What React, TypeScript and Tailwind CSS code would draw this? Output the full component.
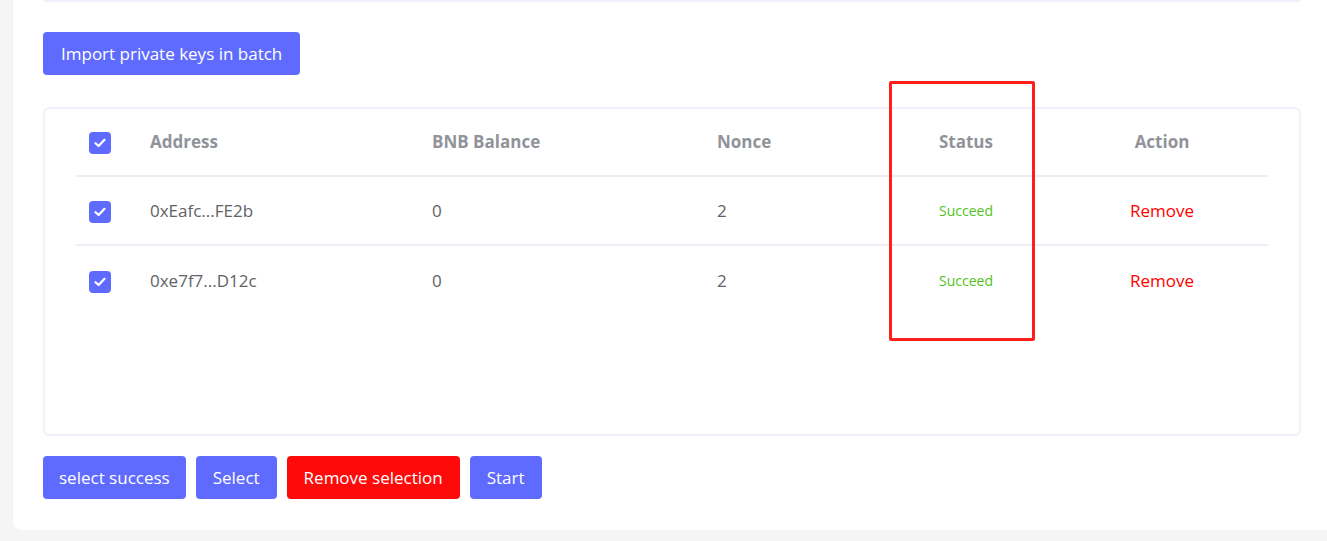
import React from "react";

type Row = {
  address: string;
  balance: string;
  nonce: string;
  status: string;
};

const rows: Row[] = [
  { address: "0xEafc...FE2b", balance: "0", nonce: "2", status: "Succeed" },
  { address: "0xe7f7...D12c", balance: "0", nonce: "2", status: "Succeed" },
];

const font = { fontFamily: '"Open Sans", "Noto Sans", sans-serif' };

function Check() {
  return (
    <span className="flex h-[22px] w-[22px] items-center justify-center rounded-[4px] bg-[#5f6bff]">
      <svg width="12" height="10" viewBox="0 0 12 10" fill="none">
        <path
          d="M1.5 5.2 L4.6 8 L10.5 1.8"
          stroke="white"
          strokeWidth="2.2"
          strokeLinecap="round"
          strokeLinejoin="round"
        />
      </svg>
    </span>
  );
}

const cols = "grid grid-cols-[61px_282px_285px_172px_180px_212px] items-center";

export default function App() {
  return (
    <div
      className="min-h-[541px] bg-[#f5f5f5] pl-[13px] text-[17px]"
      style={font}
    >
      <div className="relative h-[530px] rounded-bl-[8px] bg-white pl-[30px] pr-[26px]">
        {/* bottom edge of the panel above */}
        <div className="h-[2px] rounded-b-[4px] border-x-2 border-b-2 border-[#f0effd]" />

        <div className="pt-[30px]">
          <button className="h-[43px] rounded-[4px] bg-[#5f6bff] px-[18px] text-white">
            Import private keys in batch
          </button>
        </div>

        {/* table */}
        <div className="mt-[32px] h-[329px] rounded-[6px] border-2 border-[#f1f0fd] px-[31px]">
          <div className={`${cols} h-[68px] border-b-2 border-[#ebeef5] font-bold text-[#909399]`}>
            <div className="pl-[13px] pt-[1px]">
              <Check />
            </div>
            <div className="pl-[13px]">Address</div>
            <div className="pl-[13px]">BNB Balance</div>
            <div className="pl-[13px]">Nonce</div>
            <div className="text-center">Status</div>
            <div className="text-center">Action</div>
          </div>
          {rows.map((r, i) => (
            <div
              key={i}
              className={`${cols} h-[69px] text-[#606266] ${i < rows.length - 1 ? "border-b-2 border-[#ebeef5]" : ""}`}
            >
              <div className="pl-[13px] pt-[2px]">
                <Check />
              </div>
              <div className="pl-[13px]">{r.address}</div>
              <div className="pl-[13px]">{r.balance}</div>
              <div className="pl-[13px]">{r.nonce}</div>
              <div className="text-center text-[14px] text-[#52c41a]">{r.status}</div>
              <div className="text-center text-[#ff0000]">Remove</div>
            </div>
          ))}
        </div>

        <div className="mt-[20px] flex gap-[10px]">
          <button className="h-[43px] rounded-[4px] bg-[#5f6bff] px-[16px] text-white">
            select success
          </button>
          <button className="h-[43px] rounded-[4px] bg-[#5f6bff] px-[17px] text-white">
            Select
          </button>
          <button className="h-[43px] rounded-[4px] bg-[#ff0a0a] px-[17px] text-white">
            Remove selection
          </button>
          <button className="h-[43px] rounded-[4px] bg-[#5f6bff] px-[17px] text-white">
            Start
          </button>
        </div>

        {/* annotation */}
        <div className="absolute left-[876px] top-[81px] h-[260px] w-[146px] rounded-[2px] border-[3px] border-[#ff1f1f]" />
      </div>
    </div>
  );
}
